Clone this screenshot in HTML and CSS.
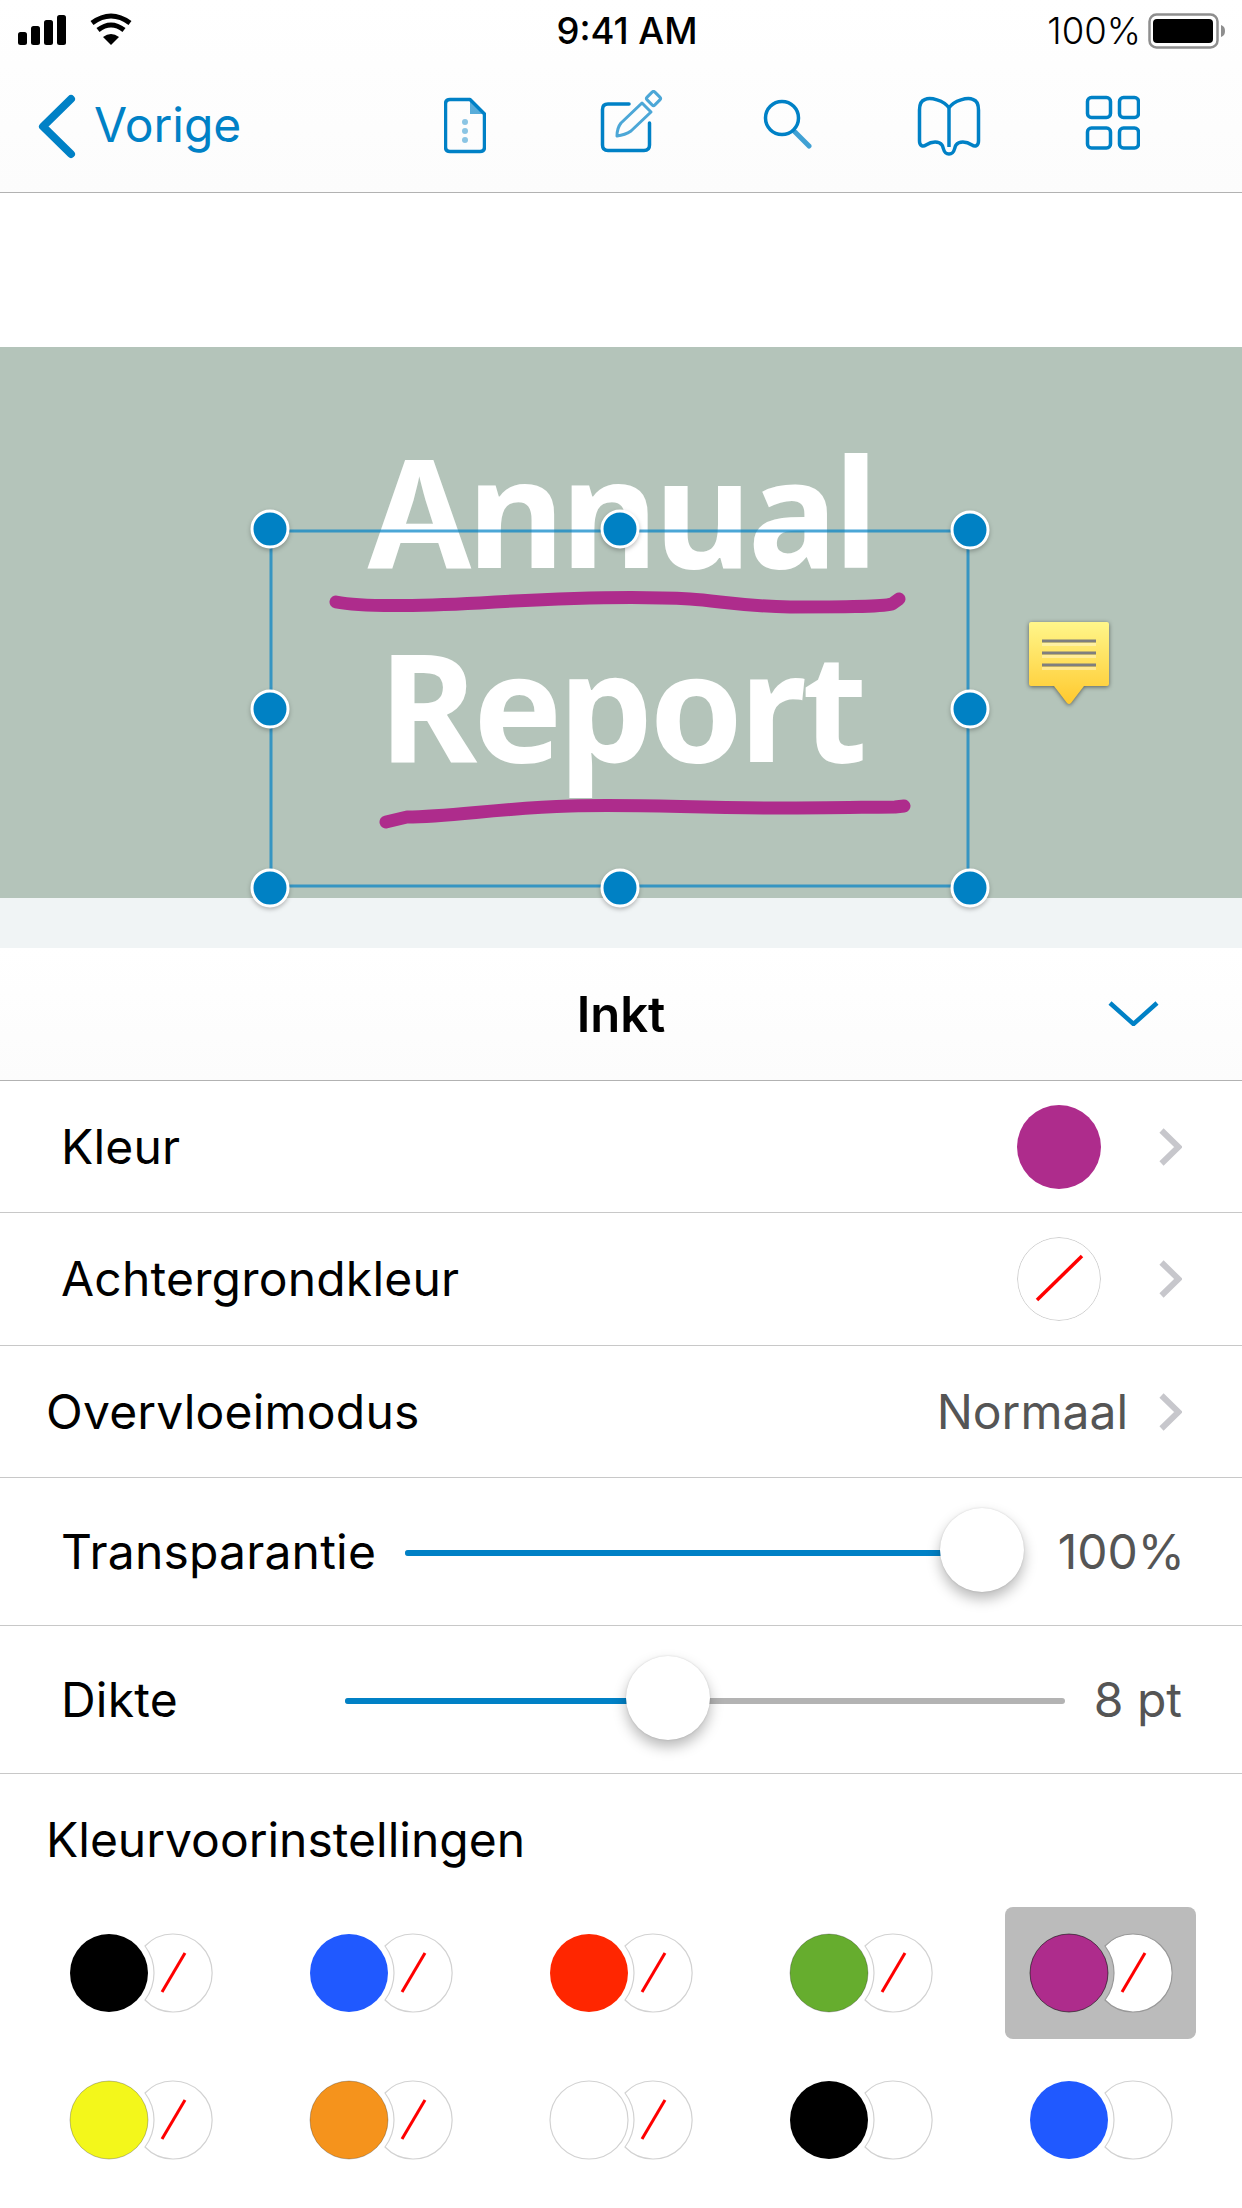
FILE: index.html
```html
<!DOCTYPE html>
<html lang="nl">
<head>
  <meta charset="UTF-8">
  <meta name="viewport" content="width=device-width, initial-scale=1.0">
  <title>Inkt</title>
  <link rel="stylesheet" href="styles.css">
</head>
<body>

  <svg class="defs" width="0" height="0">
    <defs>
      <symbol id="chevron" viewBox="0 0 23 38">
        <path d="M2.5 2.5 L19.5 19 L2.5 35.5" fill="none" stroke="#c7c7cc" stroke-width="6"/>
      </symbol>
      <path id="back-swatch" d="M100 39 A39 39 0 1 1 100 93 A45 45 0 0 0 100 39 Z"/>
      <linearGradient id="note-fill" x1="0" y1="0" x2="0" y2="1">
        <stop offset="0" stop-color="#fff68a"/>
        <stop offset="1" stop-color="#ffc92e"/>
      </linearGradient>
    </defs>
  </svg>

  <header class="top">
    <div class="status">
      <svg class="status-left" viewBox="0 0 150 62">
        <rect x="18" y="32" width="9" height="13" rx="2.5"/>
        <rect x="31" y="26" width="9" height="19" rx="2.5"/>
        <rect x="44" y="20" width="9" height="25" rx="2.5"/>
        <rect x="57" y="15" width="9" height="30" rx="2.5"/>
        <path d="M92 23 Q111 9 130 23" fill="none" stroke="#000" stroke-width="5"/>
        <path d="M98 30 Q111 20 124 30" fill="none" stroke="#000" stroke-width="5"/>
        <path d="M103 37 Q111 31 119 37 L111 45 Z"/>
      </svg>
      <span class="time">9:41 AM</span>
      <div class="status-right">
        <span class="battery-text">100%</span>
        <svg class="battery" viewBox="0 0 80 36">
          <rect x="1.5" y="1.5" width="68" height="33" rx="7" fill="none" stroke="#8e8e8e" stroke-width="2.5"/>
          <rect x="5" y="6" width="60" height="24" rx="4"/>
          <path d="M73 12 C76 13 77 15 77 18 C77 21 76 23 73 24 Z" fill="#8e8e8e"/>
        </svg>
      </div>
    </div>

    <nav class="nav">
      <a class="back">
        <svg class="back-icon" viewBox="30 90 50 70">
          <path d="M71 99 L43 126.500 L71 154" fill="none" stroke="#0081c6" stroke-width="8" stroke-linecap="round" stroke-linejoin="round"/>
        </svg>
        <span>Vorige</span>
      </a>
      <div class="nav-icons">
        <svg class="icon-file" viewBox="444 90 42 70">
          <path d="M470 99.500 H450 Q445.500 99.500 445.500 104 V147 Q445.500 151.500 450 151.500 H480 Q484.500 151.500 484.500 147 V114 Z" fill="none" stroke="#0081c6" stroke-width="3.500" stroke-linejoin="round"/>
          <path d="M470 99.500 L484.500 114 H470 Z" fill="#0081c6" fill-opacity=".65"/>
          <circle cx="465" cy="122" r="3" fill="#0081c6" fill-opacity=".45"/>
          <circle cx="465" cy="131" r="3" fill="#0081c6" fill-opacity=".45"/>
          <circle cx="465" cy="140" r="3" fill="#0081c6" fill-opacity=".45"/>
        </svg>
        <svg class="icon-edit" viewBox="586 90 77 70">
          <path d="M629 104 H608 Q602.500 104 602.500 109.500 V145 Q602.500 150.500 608 150.500 H644 Q649.500 150.500 649.500 145 V123" fill="none" stroke="#0081c6" stroke-width="3.500" stroke-linecap="round"/>
          <g fill="none" stroke="#0081c6" stroke-opacity=".7" stroke-width="3" stroke-linejoin="round">
            <path d="M617 136 Q617 128 621 123 L642 103 L651 112 L631 131 Q625 135 617 136 Z"/>
            <rect x="648" y="93" width="11" height="11" rx="2" transform="rotate(45 653.500 98.500)"/>
          </g>
        </svg>
        <svg class="icon-search" viewBox="763 90 49 70">
          <circle cx="782" cy="118" r="16.500" fill="none" stroke="#0081c6" stroke-width="3.500"/>
          <path d="M795 132 L809 146" fill="none" stroke="#0081c6" stroke-opacity=".75" stroke-width="5" stroke-linecap="round"/>
        </svg>
        <svg class="icon-book" viewBox="912 90 69 70">
          <path d="M949 108 C944 100 930 97 925 99.500 C920 101 919.500 106 919.500 110 V141 C919.500 146 923 147 926 145 C932 141 939 141 942 145 C944 148 943 154 949 154 C955 154 954 148 956 145 C959 141 966 141 972 145 C975 147 978.500 146 978.500 141 V110 C978.500 106 978 101 973 99.500 C968 97 954 100 949 108 Z M949 108 V147" fill="none" stroke="#0081c6" stroke-width="3.500"/>
        </svg>
        <svg class="icon-grid" viewBox="1081 90 59 70">
          <g fill="none" stroke="#0081c6" stroke-width="3.500">
            <rect x="1087.500" y="97.500" width="23" height="20" rx="4"/>
            <rect x="1119.500" y="97.500" width="19" height="20" rx="4"/>
            <rect x="1087.500" y="128" width="23" height="20" rx="4"/>
            <rect x="1119.500" y="128" width="19" height="20" rx="4"/>
          </g>
        </svg>
      </div>
    </nav>
  </header>

  <main class="canvas">
    <section class="slide">
      <h1 class="slide-title">Annual<br>Report</h1>
    </section>

    <!-- ink, selectie en notitie liggen over de dia -->
    <svg class="overlay" viewBox="0 193 1242 755">
      <g fill="none" stroke="#ae2c8c" stroke-width="13" stroke-linecap="round" stroke-linejoin="round">
        <path d="M336 602 C360 607 420 606 480 603 C560 598 640 596 690 599 C720 601 740 606 790 607 C840 607 880 607 892 604 L899 599"/>
        <path d="M386 822 L407 817 C450 817 500 808 570 806 C640 804 690 808 780 808 C830 808 875 807 895 807 L904 806"/>
      </g>
      <rect x="271" y="531" width="697" height="355" fill="none" stroke="#0081c6" stroke-opacity=".7" stroke-width="3"/>
      <g class="handles">
        <circle cx="270" cy="529" r="18"/>
        <circle cx="620" cy="529" r="18"/>
        <circle cx="970" cy="530" r="18"/>
        <circle cx="270" cy="709" r="18"/>
        <circle cx="970" cy="709" r="18"/>
        <circle cx="270" cy="888" r="18"/>
        <circle cx="620" cy="888" r="18"/>
        <circle cx="970" cy="888" r="18"/>
      </g>
      <g class="note">
        <path d="M1031 622 H1107 Q1109 622 1109 624 V684 Q1109 686 1107 686 H1084 L1071 703 Q1069 705 1067 703 L1054 686 H1031 Q1029 686 1029 684 V624 Q1029 622 1031 622 Z" fill="url(#note-fill)"/>
        <path d="M1042 641 H1096 M1042 653 H1096 M1042 665 H1096" stroke="#7f7f7f" stroke-width="3"/>
        <path d="M1042 644.500 H1096 M1042 656.500 H1096 M1042 668.500 H1096" stroke="#fff" stroke-opacity=".35" stroke-width="3"/>
      </g>
    </svg>
  </main>

  <section class="panel">
    <div class="panel-head">
      <h2>Inkt</h2>
      <svg class="panel-close" viewBox="0 0 51 26">
        <path d="M2 3 L25.500 24 L49 3" fill="none" stroke="#0081c6" stroke-width="4.500"/>
      </svg>
    </div>

    <div class="row row-short row-indent">
      <span class="row-label">Kleur</span>
      <span class="swatch swatch-ink"></span>
      <svg class="chevron"><use href="#chevron"/></svg>
    </div>
    <div class="row row-indent">
      <span class="row-label">Achtergrondkleur</span>
      <svg class="swatch" viewBox="0 0 84 84">
        <circle cx="42" cy="42" r="41.500" fill="#fff" stroke="#cfcfcf"/>
        <path d="M20 63 L65 19" stroke="#f00" stroke-width="3.500"/>
      </svg>
      <svg class="chevron"><use href="#chevron"/></svg>
    </div>
    <div class="row row-short">
      <span class="row-label">Overvloeimodus</span>
      <span class="row-value">Normaal</span>
      <svg class="chevron"><use href="#chevron"/></svg>
    </div>
    <div class="row row-indent row-slider">
      <span class="row-label label-opacity">Transparantie</span>
      <div class="slider">
        <div class="slider-fill" style="width: 100%"></div>
        <div class="slider-thumb" style="left: 100%"></div>
      </div>
      <span class="slider-value value-opacity">100%</span>
    </div>
    <div class="row row-indent row-slider">
      <span class="row-label label-width">Dikte</span>
      <div class="slider">
        <div class="slider-fill" style="width: 44.8%"></div>
        <div class="slider-thumb" style="left: 44.8%"></div>
      </div>
      <span class="slider-value value-width">8 pt</span>
    </div>

    <h3 class="presets-title">Kleurvoorinstellingen</h3>
    <div class="presets">
      <svg class="preset" viewBox="0 0 191 132"><use class="preset-back" href="#back-swatch"/><path class="preset-slash" d="M117 85 L140 46"/><circle class="preset-ink ink-black" cx="64" cy="66" r="39"/></svg>
      <svg class="preset" viewBox="0 0 191 132"><use class="preset-back" href="#back-swatch"/><path class="preset-slash" d="M117 85 L140 46"/><circle class="preset-ink ink-blue" cx="64" cy="66" r="39"/></svg>
      <svg class="preset" viewBox="0 0 191 132"><use class="preset-back" href="#back-swatch"/><path class="preset-slash" d="M117 85 L140 46"/><circle class="preset-ink ink-red" cx="64" cy="66" r="39"/></svg>
      <svg class="preset" viewBox="0 0 191 132"><use class="preset-back" href="#back-swatch"/><path class="preset-slash" d="M117 85 L140 46"/><circle class="preset-ink ink-green" cx="64" cy="66" r="39"/></svg>
      <svg class="preset preset-active" viewBox="0 0 191 132"><use class="preset-back" href="#back-swatch"/><path class="preset-slash" d="M117 85 L140 46"/><circle class="preset-ink ink-purple" cx="64" cy="66" r="39"/></svg>
      <svg class="preset" viewBox="0 0 191 132"><use class="preset-back" href="#back-swatch"/><path class="preset-slash" d="M117 85 L140 46"/><circle class="preset-ink ink-yellow" cx="64" cy="66" r="39"/></svg>
      <svg class="preset" viewBox="0 0 191 132"><use class="preset-back" href="#back-swatch"/><path class="preset-slash" d="M117 85 L140 46"/><circle class="preset-ink ink-orange" cx="64" cy="66" r="39"/></svg>
      <svg class="preset" viewBox="0 0 191 132"><use class="preset-back" href="#back-swatch"/><path class="preset-slash" d="M117 85 L140 46"/><circle class="preset-ink ink-white" cx="64" cy="66" r="39"/></svg>
      <svg class="preset" viewBox="0 0 191 132"><use class="preset-back" href="#back-swatch"/><circle class="preset-ink ink-black" cx="64" cy="66" r="39"/></svg>
      <svg class="preset" viewBox="0 0 191 132"><use class="preset-back" href="#back-swatch"/><circle class="preset-ink ink-blue" cx="64" cy="66" r="39"/></svg>
    </div>
  </section>

</body>
</html>
```

FILE: styles.css
```css
* {
  box-sizing: border-box;
}

html, body {
  margin: 0;
  padding: 0;
}

body {
  width: 1242px;
  height: 2208px;
  overflow: hidden;
  background-color: #ffffff;
  color: #000000;
  font-family: Inter, "Liberation Sans", sans-serif;
  font-size: 48px;
  letter-spacing: 0.2px;
  line-height: 1;
}

.defs {
  position: absolute;
}

/* balk bovenaan */
.top {
  height: 193px;
  background: linear-gradient(#ffffff, #fcfcfc);
  border-bottom: 1px solid #b2b2b2;
}

.status {
  display: grid;
  grid-template-columns: 1fr auto 1fr;
  align-items: start;
  height: 62px;
}

.status-left {
  width: 150px;
  height: 62px;
}

.time {
  margin-left: 12px;
  padding-top: 18px;
  font-size: 36.5px;
  font-weight: 500;
  letter-spacing: 0;
  line-height: 26px;
}

.status-right {
  display: flex;
  justify-content: flex-end;
  align-items: flex-start;
  padding: 13px 14px 0 0;
}

.battery-text {
  margin: 5px 7px 0 0;
  font-size: 36.5px;
  font-weight: 300;
  letter-spacing: 0;
  line-height: 26px;
}

.battery {
  width: 80px;
  height: 36px;
}

.nav {
  display: flex;
  justify-content: space-between;
  padding: 28px 102px 0 30px;
}

.back {
  display: flex;
  align-items: center;
  height: 70px;
  gap: 14px;
  color: #0081c6;
  font-size: 48px;
  letter-spacing: 0;
}

.back-icon {
  width: 50px;
  height: 70px;
}

.nav-icons {
  display: flex;
  gap: 100px;
}

.nav-icons svg {
  height: 70px;
}

.icon-file { width: 42px; }
.icon-edit { width: 77px; }
.icon-search { width: 49px; }
.icon-book { width: 69px; }
.icon-grid { width: 59px; }

/* dia */
.canvas {
  position: relative;
  height: 755px;
  padding: 154px 0 50px;
  background-color: #f0f4f5;
  background-image: linear-gradient(#ffffff, #ffffff);
  background-repeat: no-repeat;
  background-size: 100% 154px;
}

.slide {
  height: 551px;
  padding-top: 66px;
  background-color: #b4c4ba;
  text-align: center;
}

.slide-title {
  margin: 0;
  color: #ffffff;
  font-family: "Noto Sans", sans-serif;
  font-size: 150px;
  font-weight: 700;
  line-height: 194px;
  letter-spacing: -4px;
}

.overlay {
  position: absolute;
  top: 0;
  left: 0;
  width: 1242px;
  height: 755px;
}

.handles circle {
  fill: #0081c4;
  stroke: #ffffff;
  stroke-width: 3px;
  filter: drop-shadow(0 2px 2px rgba(0, 0, 0, 0.25));
}

.note {
  filter: drop-shadow(0 1px 2px rgba(0, 0, 0, 0.5));
}

/* paneel */
.panel-head {
  position: relative;
  display: flex;
  justify-content: center;
  align-items: center;
  height: 133px;
  background: linear-gradient(#ffffff, #fcfcfc);
  border-bottom: 1px solid #b2b2b2;
}

.panel-head h2 {
  margin: 0;
  font-size: 49px;
  font-weight: 600;
  letter-spacing: 0;
}

.panel-close {
  position: absolute;
  top: 52px;
  right: 83px;
  width: 51px;
  height: 26px;
}

.row {
  display: flex;
  align-items: center;
  height: 133px;
  padding: 0 60px 0 46px;
  border-bottom: 1px solid #c8c8c8;
}

.row-short {
  height: 132px;
}

.row-indent {
  padding-left: 61px;
}

.row-label {
  margin-right: auto;
}

.swatch {
  width: 84px;
  height: 84px;
  margin-right: 58px;
  border-radius: 50%;
}

.swatch-ink {
  background-color: #ae2c8c;
}

.chevron {
  width: 23px;
  height: 38px;
}

.row-value {
  margin-right: 31px;
  color: #555555;
  letter-spacing: 0;
}

.row-slider {
  height: 148px;
}

.label-opacity { width: 344px; margin-right: 0; }
.label-width { width: 284px; margin-right: 0; }

.slider {
  position: relative;
  flex: 1;
  height: 6px;
  margin-top: 3px;
  border-radius: 3px;
  background-color: #b3b3b3;
}

.slider-fill {
  height: 6px;
  border-radius: 3px;
  background-color: #0081c6;
}

.slider-thumb {
  position: absolute;
  top: -42px;
  width: 84px;
  height: 84px;
  margin-left: -42px;
  border-radius: 50%;
  background-color: #ffffff;
  box-shadow: 0 7px 14px rgba(0, 0, 0, 0.28), 0 0 2px rgba(0, 0, 0, 0.15);
}

.slider-value {
  color: #555555;
  letter-spacing: 0;
  text-align: right;
}

.value-opacity { width: 203px; margin-right: -3px; }
.value-width { width: 117px; }

.presets-title {
  display: flex;
  align-items: flex-end;
  height: 133px;
  margin: 0;
  padding: 0 0 43px 46px;
  font-size: 48px;
  font-weight: 400;
  letter-spacing: 0;
}

.presets {
  display: grid;
  grid-template-columns: repeat(5, 191px);
  grid-auto-rows: 132px;
  column-gap: 49px;
  row-gap: 15px;
  padding-left: 45px;
}

.preset {
  width: 191px;
  height: 132px;
  border-radius: 8px;
}

.preset-back {
  fill: #ffffff;
  stroke: #d2d2d2;
  stroke-width: 1.2px;
}

.preset-slash {
  fill: none;
  stroke: #ff0000;
  stroke-width: 3px;
}

.preset-ink {
  stroke: rgba(0, 0, 0, 0.25);
  stroke-width: 1px;
}

.preset-active {
  background-color: #bbbbbb;
}

.preset-active .preset-back {
  stroke: #999999;
}

.preset-active .preset-ink {
  stroke: rgba(0, 0, 0, 0.55);
}

.ink-black { fill: #000000; stroke: none; }
.ink-blue { fill: #2059ff; stroke: none; }
.ink-red { fill: #ff2600; stroke: none; }
.ink-green { fill: #66ad2e; }
.ink-purple { fill: #ae2c8c; }
.ink-yellow { fill: #f3f71b; }
.ink-orange { fill: #f5931c; }
.ink-white { fill: #ffffff; stroke: #d2d2d2; stroke-width: 1.2px; }
```
